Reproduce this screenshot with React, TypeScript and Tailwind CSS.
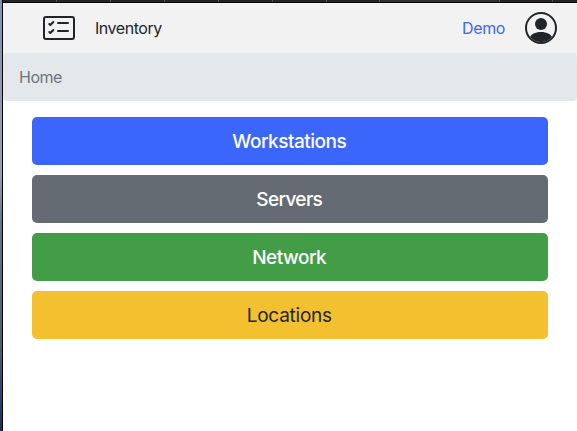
import { BsCardChecklist } from 'react-icons/bs';

const links = [
  { label: 'Workstations', style: 'bg-[#3b66fc] text-white font-medium tracking-[-0.5px]' },
  { label: 'Servers', style: 'bg-[#646b72] text-white font-medium tracking-[-0.65px]' },
  { label: 'Network', style: 'bg-[#429d46] text-white font-medium tracking-[-0.5px]' },
  { label: 'Locations', style: 'bg-[#f3c030] text-[#212529] font-normal tracking-[-0.25px]' },
];

const tabs = [
  'w-[54px] bg-[#242223]',
  'w-[54px] bg-[#242223]',
  'w-[54px] bg-[#242223]',
  'w-[54px] bg-[#242223]',
  'w-[54px] bg-[#242223]',
  'w-[54px] bg-[#242223]',
  'w-[53px] bg-[#242223]',
  'w-[120px] bg-[#302d31]',
  'w-[53px] bg-[#242223]',
  'w-[27px] bg-[#242223]',
];

function PersonCircle() {
  return (
    <svg className="size-8" viewBox="0 0 16 16" fill="currentColor" aria-hidden="true">
      <path d="M13.468 12.37C12.758 11.226 11.195 10 8 10s-4.757 1.225-5.468 2.37A6.987 6.987 0 0 0 8 15a6.987 6.987 0 0 0 5.468-2.63z" />
      <path d="M11 6a3 3 0 1 1-6 0 3 3 0 0 1 6 0z" />
      <path fillRule="evenodd" d="M8 1a7 7 0 1 0 0 14A7 7 0 0 0 8 1zM0 8a8 8 0 1 1 16 0A8 8 0 0 1 0 8z" />
    </svg>
  );
}

export default function App() {
  return (
    <div className="flex h-[431px] w-[577px] overflow-hidden bg-white font-['Inter','Liberation_Sans',sans-serif] text-[#212529]">
      <div className="w-[3px] shrink-0 border-r border-black bg-[linear-gradient(to_bottom,#8391b2_0%,#9a9eb4_40%,#64748a_52%,#4c5d78_80%,#1f2f55_100%)]" />
      <div className="flex min-w-0 flex-1 flex-col">
        <div className="flex h-[3px] shrink-0 overflow-hidden border-b border-black">
          {tabs.map((tab, i) => (
            <div key={i} className={`shrink-0 border-r border-[#555356] ${tab}`} />
          ))}
        </div>
        <header className="flex h-[50px] shrink-0 items-center bg-[#f2f2f2] pr-5 pl-10">
          <BsCardChecklist className="size-8" />
          <span className="ml-5 text-base tracking-[-0.45px]">Inventory</span>
          <a href="#" className="mr-5 ml-auto text-base tracking-[-0.4px] text-[#3b66fc]">Demo</a>
          <PersonCircle />
        </header>
        <div className="bg-linear-to-b from-[#f2f2f2] from-50% to-white to-50%">
          <nav className="flex h-12 items-center rounded bg-[#e4e8eb] px-4 text-base tracking-[-0.5px] text-[#6c757d]">
            Home
          </nav>
        </div>
        <main className="flex flex-col gap-2.5 pt-4 pr-[29px] pl-[29px]">
          {links.map((link) => (
            <button key={link.label} className={`h-12 rounded-[5px] pt-0.5 pr-[1.5px] text-[19px] ${link.style}`}>
              {link.label}
            </button>
          ))}
        </main>
      </div>
    </div>
  );
}
